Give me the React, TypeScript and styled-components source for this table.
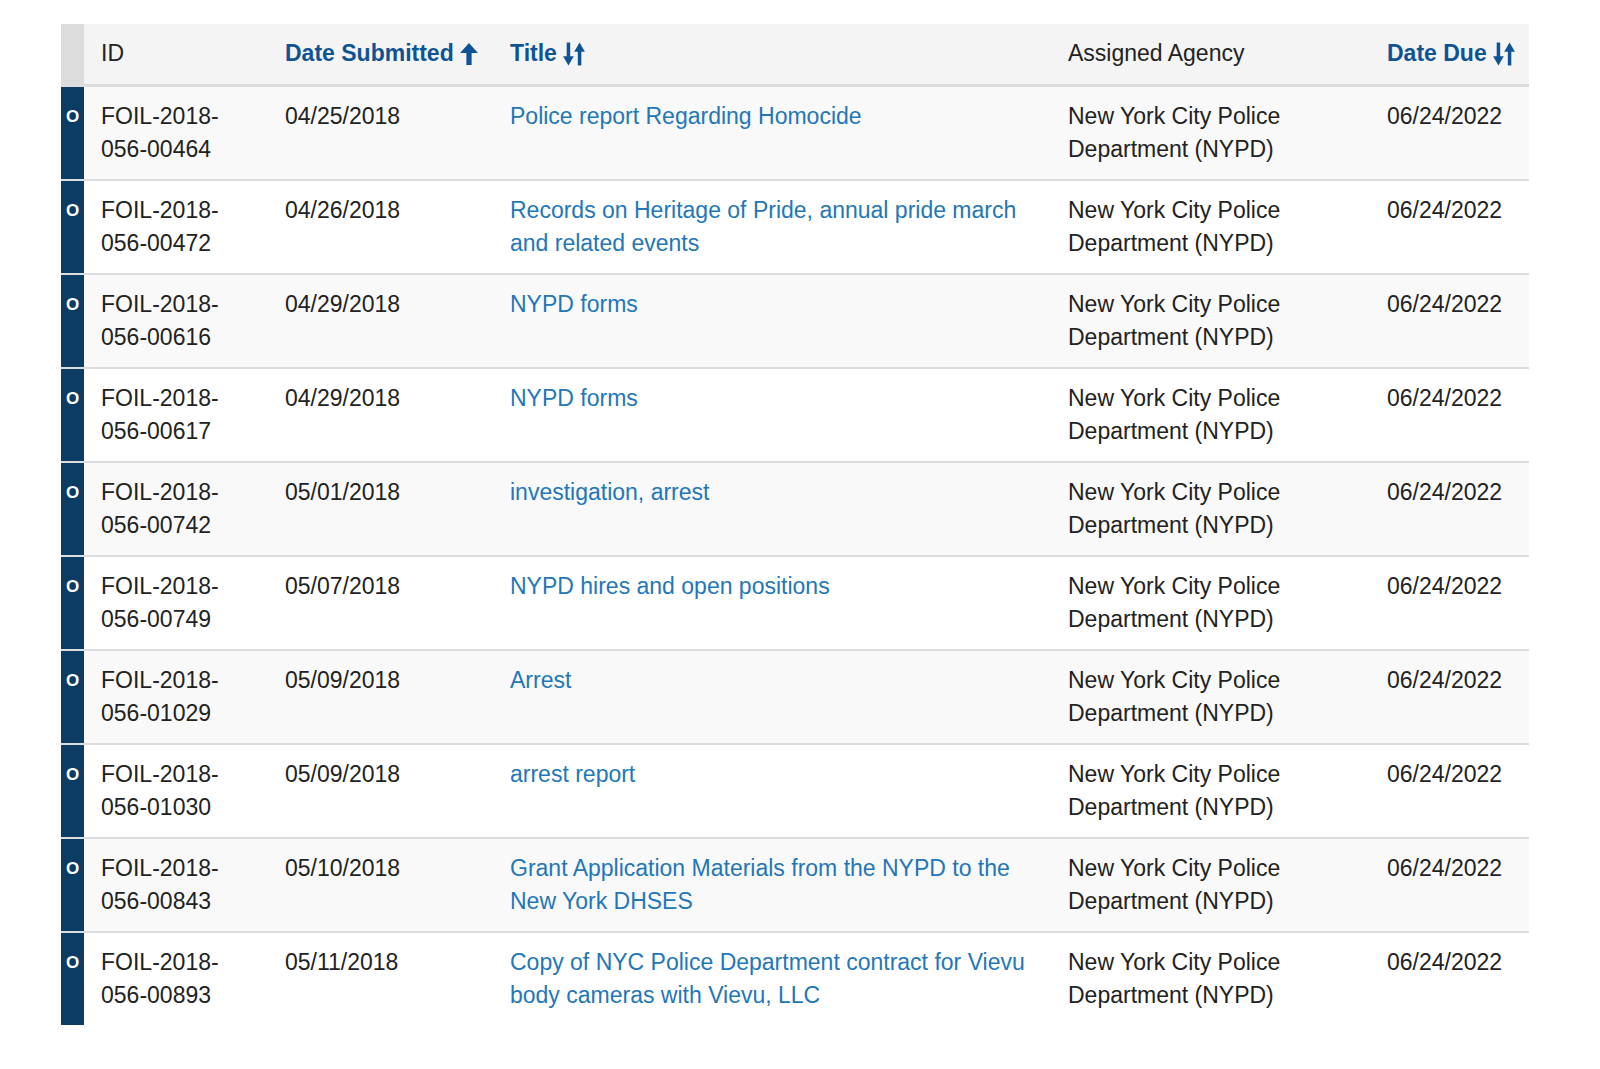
import React from "react";
import styled, { createGlobalStyle } from "styled-components";

const GlobalStyle = createGlobalStyle`
  html, body { margin: 0; padding: 0; background: #ffffff; }
  body { font-family: "Liberation Sans", Arial, Helvetica, sans-serif; color: #222; }
`;

const Page = styled.div`
  padding: 24px 71px 40px 61px;
`;

const Table = styled.table`
  width: 1468px;
  border-collapse: collapse;
  table-layout: fixed;
  font-size: 23px;
  line-height: 33.5px;
`;

const HeadRow = styled.tr`
  background: #f4f4f4;
  border-bottom: 3px solid #dddddd;
`;

const StatusHead = styled.th`
  box-sizing: border-box;
  width: 23px;
  background: #dcdcdc;
  padding: 0;
`;

const Th = styled.th<{ $w: number }>`
  box-sizing: border-box;
  width: ${(p) => p.$w}px;
  text-align: left;
  padding: 13px 4px 13px 17px;
  font-weight: normal;
  color: #222;
  white-space: nowrap;
`;

const SortLink = styled.span`
  font-weight: bold;
  color: #0f5394;
  display: inline-flex;
  align-items: center;
  gap: 6px;
`;

const Row = styled.tr<{ $odd: boolean }>`
  background: ${(p) => (p.$odd ? "#f9f9f9" : "#ffffff")};
  border-bottom: 2px solid #dddddd;
  &:last-child { border-bottom: none; }
`;

const StatusCell = styled.td`
  background: #0c3c64;
  color: #fff;
  font-weight: bold;
  font-size: 17px;
  line-height: 20px;
  text-align: center;
  vertical-align: top;
  padding: 20px 0 0 0;
`;

const Td = styled.td`
  vertical-align: top;
  padding: 13px 8px 12px 17px;
  color: #222;
`;

const Link = styled.a`
  color: #2377b8;
  text-decoration: none;
`;

const UpArrow = () => (
  <svg width="18" height="22" viewBox="0 0 17 21" fill="#0f5394">
    <polygon points="8.5,0 17,9.5 11,9.5 11,21 6,21 6,9.5 0,9.5" />
  </svg>
);

const SortIcon = () => (
  <svg width="22" height="24" viewBox="0 0 20 22" fill="#0f5394">
    <rect x="3.3" y="0.5" width="3.2" height="14" />
    <polygon points="0,13 9.8,13 4.9,21.5" />
    <rect x="13.5" y="7.5" width="3.2" height="14" />
    <polygon points="10.2,9 20,9 15.1,0.5" />
  </svg>
);

const rows = [
  ["FOIL-2018-056-00464", "04/25/2018", "Police report Regarding Homocide"],
  ["FOIL-2018-056-00472", "04/26/2018", "Records on Heritage of Pride, annual pride march and related events"],
  ["FOIL-2018-056-00616", "04/29/2018", "NYPD forms"],
  ["FOIL-2018-056-00617", "04/29/2018", "NYPD forms"],
  ["FOIL-2018-056-00742", "05/01/2018", "investigation, arrest"],
  ["FOIL-2018-056-00749", "05/07/2018", "NYPD hires and open positions"],
  ["FOIL-2018-056-01029", "05/09/2018", "Arrest"],
  ["FOIL-2018-056-01030", "05/09/2018", "arrest report"],
  ["FOIL-2018-056-00843", "05/10/2018", "Grant Application Materials from the NYPD to the New York DHSES"],
  ["FOIL-2018-056-00893", "05/11/2018", "Copy of NYC Police Department contract for Vievu body cameras with Vievu, LLC"],
];

export default function App() {
  return (
    <>
      <GlobalStyle />
      <Page>
        <Table>
          <thead>
            <HeadRow>
              <StatusHead />
              <Th $w={184}>ID</Th>
              <Th $w={225}>
                <SortLink>
                  Date Submitted <UpArrow />
                </SortLink>
              </Th>
              <Th $w={558}>
                <SortLink>
                  Title <SortIcon />
                </SortLink>
              </Th>
              <Th $w={319}>Assigned Agency</Th>
              <Th $w={159}>
                <SortLink>
                  Date Due <SortIcon />
                </SortLink>
              </Th>
            </HeadRow>
          </thead>
          <tbody>
            {rows.map(([id, date, title], i) => {
              const [a, b, c, ...rest] = id.split("-");
              return (
                <Row key={id} $odd={i % 2 === 0}>
                  <StatusCell>O</StatusCell>
                  <Td>
                    {a}-{b}-<br />
                    {c}-{rest.join("-")}
                  </Td>
                  <Td>{date}</Td>
                  <Td>
                    <Link href="#">{title}</Link>
                  </Td>
                  <Td>New York City Police Department (NYPD)</Td>
                  <Td>06/24/2022</Td>
                </Row>
              );
            })}
          </tbody>
        </Table>
      </Page>
    </>
  );
}
